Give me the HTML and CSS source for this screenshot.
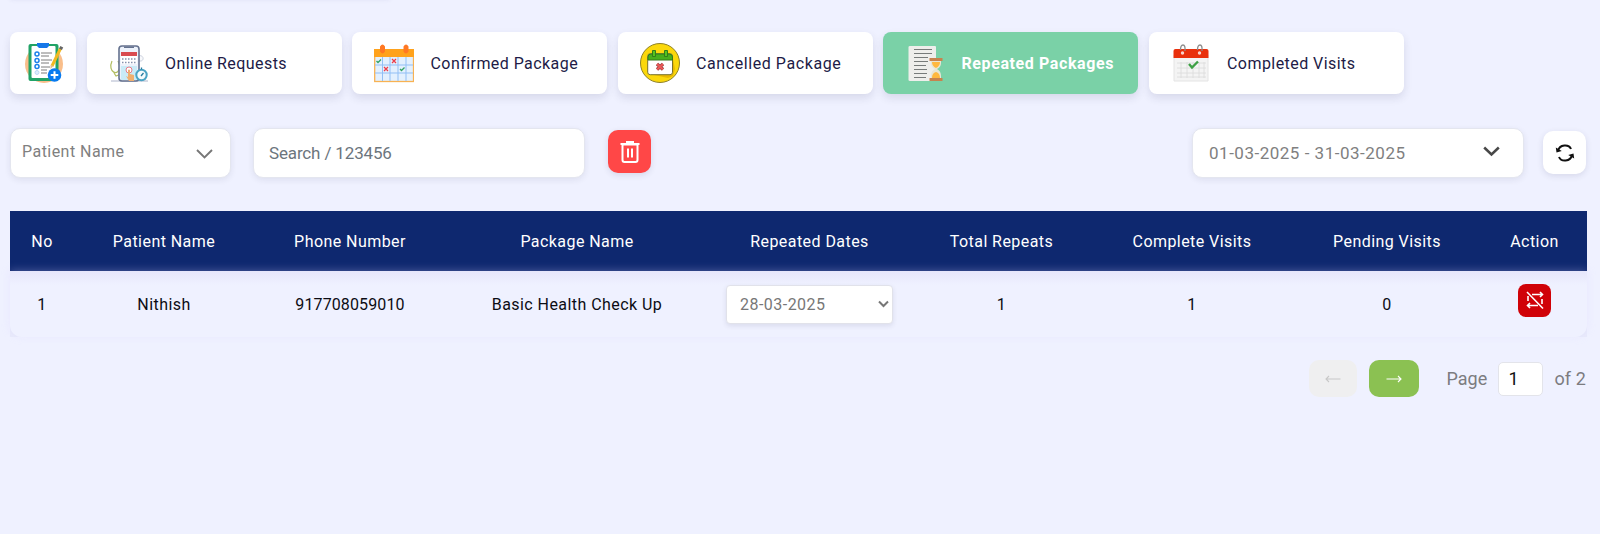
FILE: index.html
```
<!DOCTYPE html>
<html lang="en">
<head>
<meta charset="utf-8">
<title>Repeated Packages</title>
<link rel="stylesheet" href="styles.css">
</head>
<body>
<div class="top-panel"></div>
<nav class="tabs">
  <button class="tab tab-icon">
    <svg width="40" height="42" viewBox="0 0 40 42">
      <circle cx="20" cy="22" r="19" fill="#f9be8b"/>
      <rect x="4.500" y="2" width="30" height="37" rx="2" fill="#21a366"/>
      <rect x="7.500" y="4" width="24" height="32" rx="1" fill="#fff"/>
      <path d="M13 1h12v3l-2 2h-8l-2-2z" fill="#1677e8"/>
      <g fill="#fff" stroke="#1c80ea" stroke-width="1.500"><circle cx="13" cy="12" r="2"/><circle cx="13" cy="18.500" r="2"/><circle cx="13" cy="24.500" r="2"/></g>
      <circle cx="13" cy="30.500" r="2" fill="#dcecfb" stroke="#b9d7f6"/>
      <path d="M17 11h11M17 14h8M17 18h11M17 21h8M17 25h9M17 28h6M17 31h6" stroke="#7c7c7c" stroke-width="1"/>
      <path d="M36.500 6.500 28 24" stroke="#f0b920" stroke-width="3"/>
      <path d="m37.800 4.800-1.300 2.500" stroke="#666" stroke-width="3.200"/>
      <path d="m26.600 22.800 2.800 1.300-3 3z" fill="#e6bc87"/>
      <circle cx="30.500" cy="33" r="6.800" fill="#087af0"/>
      <path d="M30.500 29.200v7.600M26.700 33h7.600" stroke="#fff" stroke-width="2"/>
    </svg>
  </button>
  <button class="tab">
    <svg width="40" height="40" viewBox="0 0 40 40">
      <path d="M2 38h37" stroke="#aeb5cb"/>
      <path d="M3 18c-5 11 7 17 8 5l-2-5M5 30l2 3 5-2" fill="none" stroke="#b1bd60" stroke-width="1.200"/>
      <path d="M29 13c5-2 7 4 3 5h-3" fill="#f8f9fc" stroke="#ccd2df"/>
      <rect x="10" y="3" width="20" height="35" rx="3" fill="#edf2fb" stroke="#65728f" stroke-width="1.600"/>
      <path d="M15 3.500h10v1.500H15z" fill="#65728f"/>
      <path d="M12 9h16v4H12z" fill="#d94b50"/>
      <path d="M12 13h16v8H12z" fill="#fff"/>
      <path d="M13 16h14M13 19.500h14" stroke="#8591ad" stroke-width="1.700" stroke-dasharray="1.500 1.500"/>
      <path d="M12 23h16v14H12z" fill="#c9ebf7"/>
      <circle cx="20" cy="27" r="3" fill="#fff" stroke="#ea7a85"/>
      <path d="M19 27q1-1 2 0v4l4 1v6h-5l-3-5 2 1z" fill="#efaf70"/>
      <circle cx="32.500" cy="32" r="5.200" fill="#f5fbfd" stroke="#4aa3c4" stroke-width="2"/>
      <path d="M32.500 24.500v2M32 33l2.500-3" stroke="#287c9f" stroke-width="1.300"/>
    </svg>
    <span>Online Requests</span>
  </button>
  <button class="tab">
    <svg width="40" height="40" viewBox="0 0 40 40">
      <rect x=".7" y="7" width="38.800" height="31.500" fill="#e3f0fe" stroke="#f8b253" stroke-width="1.300"/>
      <path d="M0 6h40v8H0z" fill="#ffa21c"/>
      <path d="M8.500 14v24M16 14v24M24 14v24M32 14v24M1 22h38M1 30h38" stroke="#92bff5"/>
      <path d="M6 3.500q2.500-4 5 0v5q-2.500 4-5 0zM29.500 3.500q2.500-4 5 0v5q-2.500 4-5 0z" fill="#ff7823"/>
      <path d="m2.500 18 1.500 1.500 3-3M26 26l1.500 1.500 3-3" fill="none" stroke="#32a365" stroke-width="1.300"/>
      <path d="m18 16 4 4m0-4-4 4M10 24l4 4m0-4-4 4" stroke="#ed3c48" stroke-width="1.200"/>
    </svg>
    <span>Confirmed Package</span>
  </button>
  <button class="tab cancelled">
    <svg width="40" height="40" viewBox="0 0 40 40">
      <circle cx="20" cy="20" r="19.500" fill="#fbd80b" stroke="#8e8128"/>
      <path d="m31 31 2-15 2 10-2 7-5 2-14-3z" fill="#e8b800"/>
      <rect x="7.700" y="10.700" width="24.800" height="21" rx="2.500" fill="#fff" stroke="#77722d"/>
      <path d="M8 17v-3q0-3 3-3h18q3.500 0 3.500 3v3z" fill="#48af1b" stroke="#317c1a"/>
      <path d="M12.500 7.500h3v6h-3zM24.500 7.500h3v6h-3z" fill="#55c51d" stroke="#317c1a"/>
      <path d="m17 21 6 5.500m0-5.500-6 5.500" stroke="#9b4240" stroke-width="3.400"/>
      <path d="m17 21 6 5.500m0-5.500-6 5.500" stroke="#ee5959" stroke-width="1.800"/>
    </svg>
    <span>Cancelled Package</span>
  </button>
  <button class="tab active">
    <svg width="40" height="40" viewBox="0 0 40 40">
      <path d="M5 3h25q1 0 1 1v34H5q-1.500 0-1.500-1V4Q3.500 3 5 3z" fill="#eeeeeb"/>
      <path d="M9 6.500h18M9 10.500h18M9 14.500h14M9 18.500h14M9 22.500h12M9 26.500h13M9 30.500h13M9 34.500h12" stroke="#777b7a" stroke-width="1"/>
      <path d="M26 17h10v3q0 4-4 6 4 2 4 7v3H26v-3q0-5 4-7-4-2-4-6z" fill="#e8e5d4"/>
      <path d="M27 19h8q0 4-4 6-4-2-4-6zM27 35q0-5 4-6 4 1 4 6z" fill="#ffb83f"/>
      <path d="M24.500 15h13v3h-13zM24.500 35h13v3h-13z" fill="#c7834e"/>
    </svg>
    <span>Repeated Packages</span>
  </button>
  <button class="tab">
    <svg width="40" height="40" viewBox="0 0 40 40">
      <path d="M3 12h34v26H3z" fill="#f4f4f4" stroke="#e4e4e4"/>
      <path d="M2.500 8q0-2 2-2h31q2 0 2 2v7h-35z" fill="#e9300c"/>
      <path d="M10 19v16M16 19v16M22 19v16M28 19v16M33 19v16M6 20h29M6 25h29M6 30h29M6 34h29" stroke="#dadada" stroke-width=".8"/>
      <path d="m18 21 3 3.500 6-6" fill="none" stroke="#3ea045" stroke-width="2.400"/>
      <path d="M9.500 7q0-5 2.500-5t2 6M26.500 7q0-5 2.500-5t2 6" fill="none" stroke="#8c8c8c" stroke-width="1.300"/>
      <circle cx="11.500" cy="10" r="1.700" fill="#f7d4cc"/><circle cx="28.500" cy="10" r="1.700" fill="#f7d4cc"/>
    </svg>
    <span>Completed Visits</span>
  </button>
</nav>

<section class="filters">
  <div class="field name-select"><span>Patient Name</span>
    <svg width="17" height="10" viewBox="0 0 17 10"><path d="m1 1 7.500 7.500L16 1"/></svg>
  </div>
  <div class="field search">Search / 123456</div>
  <button class="square delete">
    <svg width="22" height="24" viewBox="0 0 22 24"><path d="M3.500 4.500h15v15.500q0 2-2 2h-11q-2 0-2-2zM1.500 4h19M8 3v-1h6v1M9 8.500v9M13 8.500v9"/></svg>
  </button>
  <div class="field dates"><span>01-03-2025 - 31-03-2025</span>
    <svg width="17" height="11" viewBox="0 0 17 11"><path d="m1.200 1.500 7.300 7 7.300-7"/></svg>
  </div>
  <button class="square refresh">
    <svg width="20" height="18" viewBox="0 0 20 18"><path d="M3 7C4.500 0 14 0 16 5M17 11c-1.500 7-11 7-13 2" fill="none" stroke="#111" stroke-width="2"/><path d="M.8 3.500 1.500 8.500 6.800 7zM19.200 14.500 18.500 9.500 13.200 11z" fill="#111"/></svg>
  </button>
</section>

<section class="table">
  <div class="row head">
    <div>No</div><div>Patient Name</div><div>Phone Number</div><div>Package Name</div><div>Repeated Dates</div><div>Total Repeats</div><div>Complete Visits</div><div>Pending Visits</div><div>Action</div>
  </div>
  <div class="row body">
    <div>1</div><div>Nithish</div><div class="digits">917708059010</div><div>Basic Health Check Up</div>
    <div><div class="date-select"><span>28-03-2025</span><svg width="11" height="8" viewBox="0 0 11 8"><path d="m1 1.500 4.500 4.500L10 1.500"/></svg></div></div>
    <div>1</div><div>1</div><div>0</div>
    <div><button class="repeat-off"><svg width="20" height="20" viewBox="0 0 20 20"><path d="M7 4.500h10.500M15 2l2.500 2.500L15 7M13 15.500H2.500M5 13l-2.500 2.500L5 18M3 6v5M17 9v5M2 2l16 16.500"/></svg></button></div>
  </div>
</section>

<footer class="pager">
  <button class="page-btn prev"><svg width="16" height="8" viewBox="0 0 16 8"><path d="M15.500 4H1M4 1 1 4l3 3"/></svg></button>
  <button class="page-btn next"><svg width="16" height="8" viewBox="0 0 16 8"><path d="M.5 4H15M12 1l3 3-3 3"/></svg></button>
  <span class="page-label">Page</span>
  <div class="page-input">1</div>
  <span>of 2</span>
</footer>
</body>
</html>
```
FILE: styles.css
```
* { box-sizing: border-box; }
body {
  margin: 0;
  padding: 0 14px 0 10px;
  height: 534px;
  overflow: hidden;
  background: #eff1ff;
  font-family: Roboto, "Open Sans", sans-serif;
  font-size: 16px;
  letter-spacing: .44px;
}
button { border: 0; padding: 0; font: inherit; letter-spacing: inherit; }
svg { display: block; flex: none; }

.top-panel { width: 380px; height: 4px; margin-top: -5px; box-shadow: 0 0 5px rgba(60, 60, 130, .12); }

.tabs { display: flex; gap: 10.500px; margin-top: 33px; }
.tab {
  display: flex;
  align-items: center;
  gap: 16.500px;
  width: 255px;
  height: 62px;
  padding: 0 0 0 22px;
  border-radius: 8px;
  background: #fff;
  color: #211b46;
  font-weight: 450;
  box-shadow: 0 4px 8px rgba(40, 40, 80, .12);
}
.tab-icon { width: 66px; padding: 0 0 0 14px; }
.cancelled { letter-spacing: .58px; }
.tab.active { background: #7ad1a7; color: #fff; font-weight: 700; letter-spacing: .6px; }

.filters { display: flex; align-items: center; height: 50px; margin-top: 34px; }
.field {
  display: flex;
  align-items: center;
  justify-content: space-between;
  height: 50px;
  background: #fff;
  border: 1px solid #e4e6ef;
  border-radius: 10px;
  color: #808080;
  box-shadow: 0 2px 6px rgba(40, 40, 80, .09);
}
.field path { fill: none; stroke: #777; stroke-width: 1.900; }
.name-select { width: 221px; margin-top: -1px; padding: 0 17px 2px 11px; letter-spacing: .46px; }
.name-select svg { margin-top: 4px; }
.search { width: 332px; margin: -1px 0 0 22px; padding-left: 15px; color: #6c757d; font-size: 17px; letter-spacing: -.15px; }
.square {
  display: flex;
  align-items: center;
  justify-content: center;
  width: 43px;
  height: 43px;
  border-radius: 10px;
  box-shadow: 0 2px 6px rgba(40, 40, 80, .12);
}
.delete { margin: 0 0 3px 23px; background: #ff4747; }
.delete path { fill: none; stroke: #fff; stroke-width: 2; }
.dates { width: 332px; margin-left: auto; padding: 0 23px 0 16px; font-size: 17px; letter-spacing: .51px; }
.dates svg { margin-top: -3px; }
.dates path { stroke: #484848; stroke-width: 2.500; }
.refresh { margin: 0 0 1px 19px; background: #fff; }

.table { width: 1577px; margin-top: 33px; background: #e8eafb; }
.row { display: grid; grid-template-columns: 64px 180px 192px 262px 203px 181px 200px 190px 105px; font-weight: 450; }
.row > div { display: flex; align-items: center; justify-content: center; }
.head { height: 60px; padding-top: 1px; background: #0e286f; color: #fff; }
.body {
  position: relative;
  height: 66px;
  color: #0c0c14;
  border-radius: 0 0 12px 12px;
  background: linear-gradient(#e6e6fb, #eff1ff 14px);
  box-shadow: 0 -1px 8px rgba(220, 210, 255, .28);
}
.digits { letter-spacing: .12px; }
.date-select {
  display: flex;
  align-items: center;
  justify-content: space-between;
  width: 167px;
  height: 39px;
  padding: 0 3px 0 13px;
  border: 1px solid #e1e2ea;
  border-radius: 4px;
  background: #fff;
  color: #777;
  font-weight: 400;
  letter-spacing: .47px;
  box-shadow: 0 2px 5px rgba(40, 40, 80, .1);
}
.date-select path { fill: none; stroke: #777; stroke-width: 2; }
.repeat-off {
  display: flex;
  align-items: center;
  justify-content: center;
  width: 33px;
  height: 33px;
  margin-bottom: 8px;
  border-radius: 8px;
  background: #d00208;
}
.repeat-off path { fill: none; stroke: #fff; stroke-width: 1.600; }

.pager { display: flex; align-items: center; justify-content: flex-end; height: 37px; margin-top: 23px; color: #7c7c80; font-size: 18px; letter-spacing: .1px; }
.page-btn { display: flex; align-items: center; justify-content: center; width: 50px; height: 37px; border-radius: 10px; }
.page-btn path { fill: none; stroke: currentColor; stroke-width: 1.100; }
.prev { width: 48px; background: #efeff0; color: #c8c8c8; }
.next { margin: 0 27px 0 12px; background: #8bc152; color: #fff; }
.page-input {
  display: flex;
  align-items: center;
  width: 45px;
  height: 34px;
  margin: 0 11px;
  padding: 0 0 1px 9px;
  border: 1px solid #e3e4ea;
  border-radius: 5px;
  background: #fff;
  color: #111;
}
```
